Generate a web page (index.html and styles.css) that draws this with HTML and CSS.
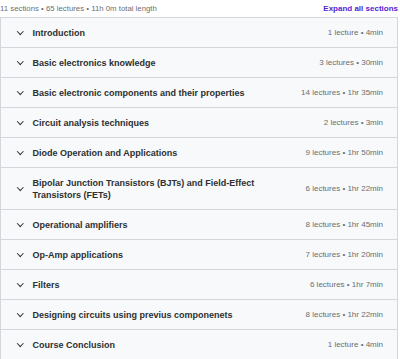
FILE: index.html
```html
<!DOCTYPE html>
<html>
<head>
<meta name="viewport" content="width=device-width, initial-scale=1.0">
<link rel="stylesheet" href="styles.css">
</head>
<body>
<div class="top">
  <span class="stats">11 sections &bull; 65 lectures &bull; 11h 0m total length</span>
  <a class="expand">Expand all sections</a>
</div>
<div class="curriculum">
  <div class="section"><span class="chev"></span><span class="title">Introduction</span><span class="meta">1 lecture &bull; 4min</span></div>
  <div class="section"><span class="chev"></span><span class="title">Basic electronics knowledge</span><span class="meta">3 lectures &bull; 30min</span></div>
  <div class="section"><span class="chev"></span><span class="title">Basic electronic components and their properties</span><span class="meta">14 lectures &bull; 1hr 35min</span></div>
  <div class="section"><span class="chev"></span><span class="title">Circuit analysis techniques</span><span class="meta">2 lectures &bull; 3min</span></div>
  <div class="section"><span class="chev"></span><span class="title">Diode Operation and Applications</span><span class="meta">9 lectures &bull; 1hr 50min</span></div>
  <div class="section"><span class="chev"></span><span class="title">Bipolar Junction Transistors (BJTs) and Field-Effect Transistors (FETs)</span><span class="meta">6 lectures &bull; 1hr 22min</span></div>
  <div class="section"><span class="chev"></span><span class="title">Operational amplifiers</span><span class="meta">8 lectures &bull; 1hr 45min</span></div>
  <div class="section"><span class="chev"></span><span class="title">Op-Amp applications</span><span class="meta">7 lectures &bull; 1hr 20min</span></div>
  <div class="section"><span class="chev"></span><span class="title">Filters</span><span class="meta">6 lectures &bull; 1hr 7min</span></div>
  <div class="section"><span class="chev"></span><span class="title">Designing circuits using previus componenets</span><span class="meta">8 lectures &bull; 1hr 22min</span></div>
  <div class="section"><span class="chev"></span><span class="title">Course Conclusion</span><span class="meta">1 lecture &bull; 4min</span></div>
</div>
</body>
</html>
```
FILE: styles.css
```css
body {
  margin: 0;
  background: #fff;
  font-family: "Liberation Sans", Arial, sans-serif;
  color: #2d2f31;
  overflow: hidden;
}

.top {
  display: flex;
  justify-content: space-between;
  align-items: center;
  height: 17px;
  padding: 0 2px 0 0;
}

.stats {
  font-size: 7.8px;
  color: #6a6f73;
}

.expand {
  font-size: 8px;
  font-weight: bold;
  color: #5624d0;
}

.curriculum {
  border: 1px solid #d1d7dc;
  margin-right: 2px;
}

.section {
  display: flex;
  align-items: center;
  background: #f7f9fa;
  border-bottom: 1px solid #d1d7dc;
  padding: 9px 14px 8px 17px;
  line-height: 12px;
}

.chev {
  width: 3.5px;
  height: 3.5px;
  border-right: 1.2px solid #2d2f31;
  border-bottom: 1.2px solid #2d2f31;
  transform: rotate(45deg);
  margin: -3px 10px 0 0;
  flex: none;
}

.title {
  flex: 1;
  font-size: 9px;
  font-weight: bold;
  padding-right: 22px;
}

.meta {
  flex: none;
  font-size: 8px;
  color: #6a6f73;
}
```
